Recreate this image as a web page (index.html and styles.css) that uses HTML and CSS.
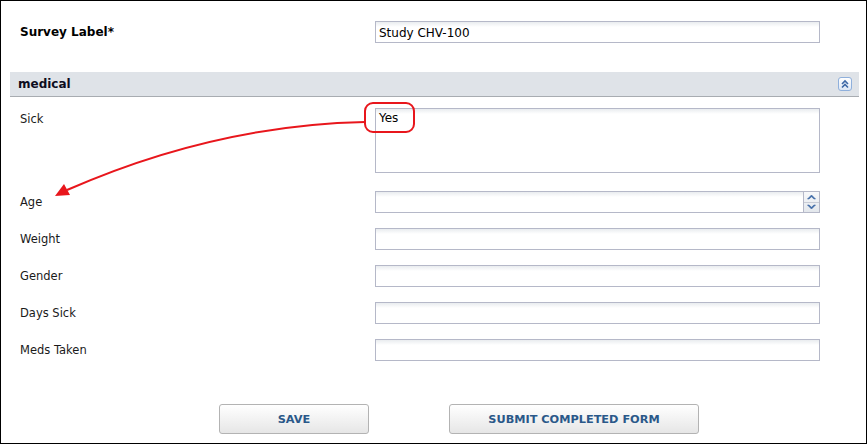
FILE: index.html
```html
<!DOCTYPE html>
<html lang="en">
<head>
    <meta charset="UTF-8">
    <title>Survey | Study CHV-100</title>
    <link rel="stylesheet" href="styles.css">
</head>
<body>
    <div class="frame">
        <div class="field-row survey-row">
            <label class="field-label strong">Survey Label*</label>
            <input class="text-field" type="text" value="Study CHV-100">
        </div>

        <div class="section-head">
            <span>medical</span>
            <span class="collapse-btn" title="Collapse">
                <svg width="10" height="10" viewBox="0 0 10 10">
                    <path d="M2 5 L5 2 L8 5 M2 8.5 L5 5.5 L8 8.5" fill="none" stroke="#3d68a6" stroke-width="1.6"/>
                </svg>
            </span>
        </div>

        <div class="fields">
            <div class="field-row">
                <label class="field-label">Sick</label>
                <textarea class="text-field area">Yes</textarea>
            </div>
            <div class="field-row">
                <label class="field-label">Age</label>
                <div class="spin-field">
                    <input class="text-field" type="text">
                    <span class="spinner">
                        <span class="spin-up">
                            <svg width="9" height="6" viewBox="0 0 9 6"><path d="M0.5 5 L4.5 1 L8.5 5 L7 5 L4.5 2.8 L2 5 Z" fill="#3d68a6" stroke="#3d68a6" stroke-width="0.6"/></svg>
                        </span>
                        <span class="spin-down">
                            <svg width="9" height="6" viewBox="0 0 9 6"><path d="M0.5 1 L4.5 5 L8.5 1 L7 1 L4.5 3.2 L2 1 Z" fill="#3d68a6" stroke="#3d68a6" stroke-width="0.6"/></svg>
                        </span>
                    </span>
                </div>
            </div>
            <div class="field-row">
                <label class="field-label">Weight</label>
                <input class="text-field" type="text">
            </div>
            <div class="field-row">
                <label class="field-label">Gender</label>
                <input class="text-field" type="text">
            </div>
            <div class="field-row">
                <label class="field-label">Days Sick</label>
                <input class="text-field" type="text">
            </div>
            <div class="field-row">
                <label class="field-label">Meds Taken</label>
                <input class="text-field" type="text">
            </div>
        </div>

        <div class="actions">
            <button class="btn save-btn">Save</button>
            <button class="btn submit-btn">Submit Completed Form</button>
        </div>

        <!-- callout drawn over the form -->
        <svg class="callout" width="868" height="444" viewBox="0 0 868 444">
            <rect x="365" y="103" width="49" height="29" rx="8" ry="8" fill="none" stroke="#e8161c" stroke-width="2"/>
            <path d="M365 122 Q 215 125 67 190" fill="none" stroke="#e8161c" stroke-width="2"/>
            <polygon points="55,196 64,184 70,195" fill="#e8161c"/>
        </svg>
    </div>
</body>
</html>
```

FILE: styles.css
```css
* {
    margin: 0;
    padding: 0;
    box-sizing: border-box;
}

body {
    font-family: 'DejaVu Sans', Verdana, sans-serif;
    font-size: 12px;
    color: #111;
    background: #fff;
}

.frame {
    position: relative;
    width: 867px;
    height: 444px;
    border: 1px solid #000;
}

.field-row {
    display: grid;
    grid-template-columns: 355px 445px;
    padding-left: 19px;
    align-items: start;
}

.survey-row {
    margin-top: 20px;
}

.field-label {
    line-height: 22px;
    font-size: 11.5px;
    color: #1a1a1a;
}

.field-label.strong {
    font-weight: bold;
    font-size: 12px;
    color: #000;
}

.text-field {
    display: block;
    width: 445px;
    height: 22px;
    border: 1px solid #b5b8c8;
    background: linear-gradient(#e9ecef, #fff 5px);
    font-family: inherit;
    font-size: 12px;
    color: #000;
    padding: 2px 3px 0;
    outline: none;
}

.text-field.area {
    height: 65px;
    resize: none;
    padding-top: 2px;
    line-height: 15px;
    margin-bottom: 3px;
}

.section-head {
    display: flex;
    justify-content: space-between;
    align-items: center;
    margin: 29px 0 0 9px;
    width: 849px;
    height: 25px;
    padding: 0 7px 0 8px;
    background: #dfe3e8;
    border-bottom: 1px solid #a8acb1;
    font-weight: bold;
    font-size: 12px;
    color: #0d0d1e;
}

.collapse-btn {
    display: flex;
    align-items: center;
    justify-content: center;
    width: 14px;
    height: 14px;
    border: 1px solid #8fb0dc;
    border-radius: 3px;
    background: linear-gradient(#ffffff, #dde7f5);
}

.fields {
    display: flex;
    flex-direction: column;
    gap: 15px;
    margin-top: 11px;
}

.spin-field {
    position: relative;
    width: 445px;
}

.spinner {
    position: absolute;
    top: 1px;
    right: 1px;
    width: 16px;
    height: 20px;
    display: flex;
    flex-direction: column;
    border-left: 1px solid #b5b8c8;
    background: linear-gradient(#f7f8fa, #e3e7ec);
}

.spin-up,
.spin-down {
    flex: 1;
    display: flex;
    align-items: center;
    justify-content: center;
}

.spin-up {
    border-bottom: 1px solid #c8ccd6;
}

.actions {
    display: flex;
    gap: 80px;
    padding-left: 218px;
    margin-top: 43px;
}

.btn {
    height: 30px;
    border: 1px solid #b3b3b3;
    border-radius: 3px;
    background: linear-gradient(#ffffff, #e6e6e6);
    font-family: 'DejaVu Sans', sans-serif;
    font-weight: bold;
    font-size: 11.3px;
    text-transform: uppercase;
    color: #2a5889;
    cursor: pointer;
}

.save-btn {
    width: 150px;
}

.submit-btn {
    width: 250px;
}

.callout {
    position: absolute;
    left: -1px;
    top: -1px;
    pointer-events: none;
}
```
